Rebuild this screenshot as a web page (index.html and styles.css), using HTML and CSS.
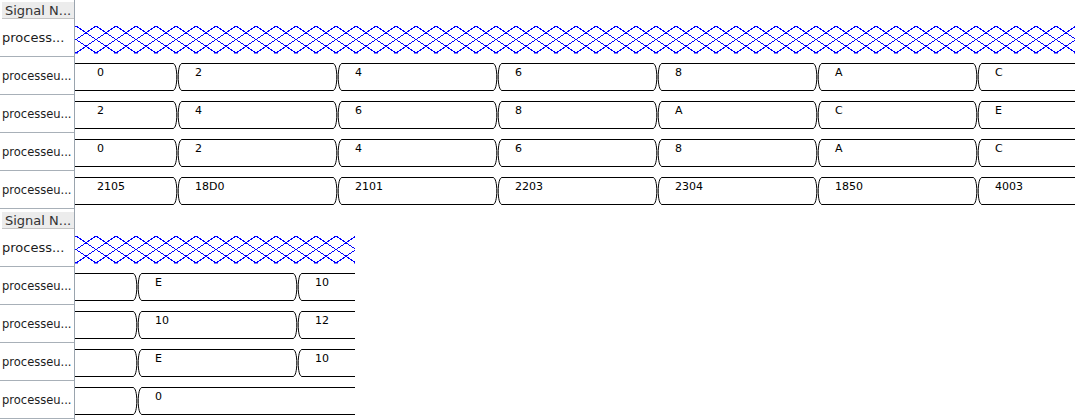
FILE: index.html
```html
<!DOCTYPE html>
<html lang="en">
<head>
    <meta charset="UTF-8">
    <meta name="viewport" content="width=device-width, initial-scale=1.0">
    <title>Waveform</title>
    <link rel="stylesheet" href="styles.css">
</head>
<body>
    <svg class="defs" width="0" height="0">
        <defs>
            <pattern id="hatch" patternUnits="userSpaceOnUse" width="20" height="27" patternTransform="translate(1 26)">
                <path class="hatch-line" d="M0 0 L20 13.5 M0 13.5 L20 27 M20 0 L0 13.5 M20 13.5 L0 27" stroke="#0000ff" stroke-width="1" fill="none"/>
            </pattern>
        </defs>
    </svg>
    <div class="panel" id="panel1"></div>
    <div class="panel" id="panel2"></div>
    <script>
        const panels = [
            {
                id: "panel1",
                width: 1000,
                rows: [
                    { t: [102, 262, 422, 582, 742, 902], v: ["0", "2", "4", "6", "8", "A", "C"] },
                    { t: [102, 262, 422, 582, 742, 902], v: ["2", "4", "6", "8", "A", "C", "E"] },
                    { t: [102, 262, 422, 582, 742, 902], v: ["0", "2", "4", "6", "8", "A", "C"] },
                    { t: [102, 262, 422, 582, 742, 902], v: ["2105", "18D0", "2101", "2203", "2304", "1850", "4003"] }
                ]
            },
            {
                id: "panel2",
                width: 280,
                rows: [
                    { t: [62, 222], v: ["", "E", "10"] },
                    { t: [62, 222], v: ["", "10", "12"] },
                    { t: [62, 222], v: ["", "E", "10"] },
                    { t: [62], v: ["", "0"] }
                ]
            }
        ];

        function busPath(t, w, top) {
            const y0 = top + 0.5, y1 = top + 27.5, ym = (y0 + y1) / 2;
            let d = "";
            t.forEach(function (c) {
                const l = c - 0.2, r = c + 1.2;
                d += " M" + (c - 4) + " " + y0 + " C" + (c - 1.5) + " " + y0 + " " + l + " " + (ym - 7) + " " + l + " " + ym +
                     " C" + l + " " + (ym + 7) + " " + (c - 1.5) + " " + y1 + " " + (c - 4) + " " + y1;
                d += " M" + (c + 5) + " " + y0 + " C" + (c + 2.5) + " " + y0 + " " + r + " " + (ym - 7) + " " + r + " " + ym +
                     " C" + r + " " + (ym + 7) + " " + (c + 2.5) + " " + y1 + " " + (c + 5) + " " + y1;
            });
            // straight runs between transitions
            const starts = [0].concat(t.map(function (c) { return c + 5; }));
            const ends = t.map(function (c) { return c - 4; }).concat([w]);
            for (let i = 0; i < starts.length; i++) {
                d += " M" + starts[i] + " " + y0 + " L" + ends[i] + " " + y0;
                d += " M" + starts[i] + " " + y1 + " L" + ends[i] + " " + y1;
            }
            return d;
        }

        panels.forEach(function (p) {
            let names = '<div class="names"><div class="head">Signal N...</div><div class="name big">process...</div>';
            let svg = '<svg class="wave" width="' + p.width + '" height="210">';
            svg += '<rect x="0" y="26" width="' + p.width + '" height="27.5" fill="url(#hatch)"/>';
            p.rows.forEach(function (row, i) {
                names += '<div class="name">processeu...</div>';
                const top = 63 + 38 * i;
                svg += '<path d="' + busPath(row.t, p.width, top) + '" stroke="#000" fill="none"/>';
                const xs = [22].concat(row.t.map(function (c) { return c + 18; }));
                row.v.forEach(function (val, j) {
                    if (val) svg += '<text x="' + xs[j] + '" y="' + (top + 13) + '">' + val + '</text>';
                });
            });
            svg += '</svg>';
            names += '</div>';
            document.getElementById(p.id).innerHTML = names + '<div class="waves">' + svg + '</div>';
        });
    </script>
</body>
</html>
```

FILE: styles.css
```css
body {
    margin: 0;
    font-family: "DejaVu Sans", sans-serif;
    background: #ffffff;
}

.defs {
    position: absolute;
}

.hatch-line {
    shape-rendering: crispEdges;
}

.panel {
    display: flex;
    height: 210px;
}

.names {
    width: 74px;
    border-right: 1px solid #9aa4ae;
    display: flex;
    flex-direction: column;
}

.head {
    height: 16px;
    margin: 2px 0 0 2px;
    padding-left: 3px;
    background: #ececec;
    border-bottom: 1px solid #c4c4c4;
    font-size: 13px;
    line-height: 17px;
    color: #333333;
    white-space: nowrap;
    overflow: hidden;
}

.name {
    height: 37px;
    border-bottom: 1px solid #a8b0b8;
    display: flex;
    align-items: center;
    padding-left: 2px;
    font-size: 11.5px;
    color: #1c1c1c;
    white-space: nowrap;
    overflow: hidden;
}

.name.big {
    font-size: 13px;
}

.waves svg {
    display: block;
}

.wave text {
    font-size: 11px;
    fill: #000000;
}
```
